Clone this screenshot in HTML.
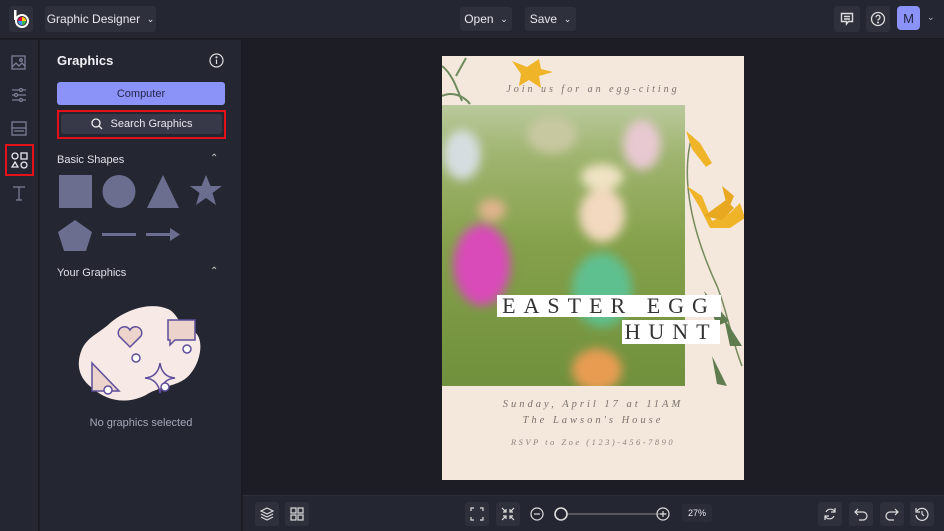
<!DOCTYPE html>
<html><head><meta charset="utf-8"><style>
*{box-sizing:border-box;margin:0;padding:0}
body{width:944px;height:531px;overflow:hidden;background:#1c1d25;font-family:"Liberation Sans",sans-serif;color:#e6e7ee;position:relative}
.abs{position:absolute}
.top{left:0;top:0;width:944px;height:39px;background:#242631;border-bottom:1px solid #1a1b22}
.btn{background:#2e303c;border-radius:3px;font-size:12px;color:#e8e8ef;display:flex;align-items:center;justify-content:center}
.rail{left:0;top:40px;width:39px;height:491px;background:#242631;border-right:1px solid #1a1b22}
.panel{left:40px;top:40px;width:202px;height:491px;background:#242631;border-right:1px solid #1a1b22}
.bottom{left:243px;top:495px;width:701px;height:36px;background:#242631;border-top:1px solid #2c2e3a}
.ib{background:#2e303c;border-radius:3px;width:24px;height:24px;display:flex;align-items:center;justify-content:center}
.shape{fill:#6b6e8e}
.serif{font-family:"Liberation Serif",serif}
</style></head><body>
<div class="abs top"></div>
<div class="abs btn" style="left:9px;top:6px;width:24px;height:26px;background:#2e303c">
<svg width="18" height="20" viewBox="0 0 18 20"><rect x="2" y="1" width="2.5" height="10" fill="#fff"/><circle cx="10" cy="12" r="6" fill="none" stroke="#fff" stroke-width="2"/><circle cx="10" cy="12" r="4" fill="#e04"/><path d="M10 8a4 4 0 0 1 4 4h-4z" fill="#fc0"/><path d="M10 12h4a4 4 0 0 1-4 4z" fill="#3b5"/><path d="M10 12v4a4 4 0 0 1-4-4z" fill="#39f"/></svg></div>
<div class="abs btn" style="left:45px;top:6px;width:111px;height:26px;font-size:12px">Graphic Designer&nbsp;&nbsp;<span style="font-size:9px">⌄</span></div>
<div class="abs btn" style="left:460px;top:7px;width:52px;height:24px">Open&nbsp;&nbsp;<span style="font-size:9px">⌄</span></div>
<div class="abs btn" style="left:525px;top:7px;width:51px;height:24px">Save&nbsp;&nbsp;<span style="font-size:9px">⌄</span></div>
<div class="abs btn" style="left:834px;top:6px;width:26px;height:26px"><svg width="14" height="14" viewBox="0 0 14 14" fill="none" stroke="#ddd" stroke-width="1.4"><path d="M1.5 1.5h11v8h-4l-2 2.5v-2.5h-5z"/><path d="M4 4.5h6M4 7h6"/></svg></div>
<div class="abs btn" style="left:866px;top:6px;width:24px;height:26px"><svg width="16" height="16" viewBox="0 0 16 16" fill="none" stroke="#ddd" stroke-width="1.3"><circle cx="8" cy="8" r="6.5"/><path d="M6 6.3a2 2 0 1 1 2.5 1.9c-.5.2-.5.6-.5 1.3"/><circle cx="8" cy="11.5" r=".4" fill="#ddd"/></svg></div>
<div class="abs btn" style="left:897px;top:6px;width:23px;height:24px;background:#8b93f8;color:#1e2040;font-size:13px;border-radius:4px">M</div>
<div class="abs" style="left:927px;top:12px;font-size:9px;color:#bbb">⌄</div>

<div class="abs rail"></div>
<svg class="abs" style="left:10px;top:54px" width="18" height="160" fill="none" stroke="#7c7f96" stroke-width="1.3">
<rect x="2" y="2" width="13" height="13"/><path d="M2 13l4-4 3 3 3-3 3 3"/><circle cx="11" cy="6" r="1.3"/>
<path d="M2 36h14M2 41h14M2 46h14"/><circle cx="11" cy="36" r="1.5" fill="#242631"/><circle cx="6" cy="41" r="1.5" fill="#242631"/><circle cx="11" cy="46" r="1.5" fill="#242631"/>
<rect x="2" y="68" width="14" height="13"/><path d="M2 74h14M4 77h10"/>
<path d="M3 133h12M9 133v13M6 146h6" />
</svg>
<div class="abs" style="left:5px;top:144px;width:29px;height:32px;border:2.5px solid #e4101a"></div>
<svg class="abs" style="left:11px;top:152px" width="18" height="17" fill="none" stroke="#e8e8f0" stroke-width="1.3"><circle cx="4" cy="4" r="3"/><rect x="10" y="1" width="6" height="6"/><path d="M4 10l3 5H1z"/><circle cx="13" cy="13" r="3"/></svg>

<div class="abs panel"></div>
<div class="abs" style="left:57px;top:53px;font-size:13px;font-weight:bold;color:#f0f0f5">Graphics</div>
<svg class="abs" style="left:209px;top:53px" width="15" height="15" fill="none" stroke="#ddd" stroke-width="1.2"><circle cx="7.5" cy="7.5" r="6.5"/><path d="M7.5 6.5v4.5"/><circle cx="7.5" cy="4.3" r=".5" fill="#ddd"/></svg>
<div class="abs btn" style="left:57px;top:82px;width:168px;height:23px;background:#8b93f8;color:#23264a;font-size:11px">Computer</div>
<div class="abs" style="left:57px;top:110px;width:169px;height:29px;border:2.5px solid #e4101a"></div>
<div class="abs btn" style="left:61px;top:114px;width:161px;height:20px;background:#373948;font-size:11px"><svg width="12" height="12" fill="none" stroke="#eee" stroke-width="1.3" style="margin-right:8px"><circle cx="5" cy="5" r="4"/><path d="M8 8l3 3"/></svg>Search Graphics</div>
<div class="abs" style="left:57px;top:154px;font-size:11px;color:#e0e0e8">Basic Shapes</div>
<div class="abs" style="left:210px;top:153px;font-size:10px;color:#ccc">⌃</div>
<svg class="abs" style="left:58px;top:174px" width="168" height="80">
<rect class="shape" x="1" y="1" width="33" height="33"/>
<circle class="shape" cx="61" cy="17.5" r="16.5"/>
<path class="shape" d="M105 1l16 33H89z"/>
<path class="shape" d="M148 1l4.5 11h11.5l-9.5 7 3.5 12-10-7-10 7 3.5-12-9.5-7h11.5z"/>
<path class="shape" d="M17 46l17 12-6 19H6L0 58z"/>
<rect class="shape" x="44" y="59" width="34" height="3"/>
<rect class="shape" x="88" y="59" width="26" height="3"/><path class="shape" d="M112 54l10 6.5-10 6.5z"/>
</svg>
<div class="abs" style="left:57px;top:267px;font-size:11px;color:#e0e0e8">Your Graphics</div>
<div class="abs" style="left:210px;top:266px;font-size:10px;color:#ccc">⌃</div>
<svg class="abs" style="left:78px;top:303px" width="124" height="100">
<path d="M30 22C45 8 70 -2 90 6c10 4 12 20 25 22 12 6 8 30-2 42-10 14-30 12-45 22-20 10-40 6-55-8C0 74-2 60 4 46 10 34 18 32 30 22z" fill="#f7e9e6"/>
<g fill="#ecd3cb" stroke="#5e4e9b" stroke-width="1.5">
<path d="M52 44l-11-11a6 6 0 0 1 11-6 6 6 0 0 1 11 6z"/>
<path d="M90 17h27v20H97l-5 5v-5h-2z"/>
<path d="M14 60l27 28H14z"/>
<path d="M82 60q2 14 15 15-13 1-15 15-2-14-15-15 13-1 15-15z" fill="none"/>
</g>
<g fill="#fff" stroke="#5e4e9b" stroke-width="1.5"><circle cx="58" cy="55" r="4"/><circle cx="109" cy="46" r="4"/><circle cx="30" cy="87" r="4"/><circle cx="87" cy="84" r="4"/></g>
</svg>
<div class="abs" style="left:40px;top:417px;width:202px;text-align:center;font-size:11px;color:#a6a8ba">No graphics selected</div>

<!-- card -->
<div class="abs" style="left:442px;top:56px;width:302px;height:424px;background:#f4e7dc;overflow:hidden">
<svg class="abs" style="left:0;top:0" width="302" height="424">
<path d="M0 10c10 8 14 20 20 35M0 40c10-5 22 0 28 8M14 20l10-18" stroke="#6d8a5d" stroke-width="2" fill="none"/>
<path d="M70 5l15 6 12-8 2 10 12 3-14 4 2 12-12-8-10 6 2-12z" fill="#f0b429"/>
<path d="M250 80c-10 35-5 85 25 150 10 25 15 55 25 80" stroke="#748a5c" stroke-width="1.5" fill="none"/>
<path d="M244 75l14 12 12 20-6 4-14-18z" fill="#f0b429"/>
<path d="M245 130l15 10 10 25 18-8 10-10 5 15-15 10-20 0-10-20z" fill="#f0b429"/>
<path d="M262 160l22-16 8 8-12 12zM280 130l12 10-6 14z" fill="#e8a820"/>
<path d="M262 235l25 30-12 5zM282 262l18 28-12 0zM270 300l15 30-10-2z" fill="#5e7c50"/>
</svg>
<div class="abs serif" style="left:0;top:28px;width:302px;text-align:center;font-style:italic;font-size:10px;letter-spacing:3px;color:#7a736e">Join us for an egg-citing</div>
<div class="abs" style="left:0;top:49px;width:243px;height:281px;overflow:hidden">
<div style="position:absolute;left:-10px;top:-10px;width:263px;height:301px;filter:blur(5px);background:
radial-gradient(ellipse 32px 38px at 170px 120px,#f2d9bf 70%,transparent 72%),
radial-gradient(ellipse 30px 18px at 170px 82px,#efe3c4 70%,transparent 72%),
radial-gradient(ellipse 42px 52px at 170px 195px,#5fc08f 70%,transparent 72%),
radial-gradient(ellipse 35px 30px at 165px 275px,#e89c52 70%,transparent 72%),
radial-gradient(ellipse 42px 60px at 50px 170px,#d84bb8 65%,transparent 70%),
radial-gradient(ellipse 22px 18px at 60px 115px,#e0b38d 60%,transparent 65%),
radial-gradient(ellipse 30px 40px at 30px 60px,#d6dde0 60%,transparent 65%),
radial-gradient(ellipse 30px 40px at 210px 50px,#e8c9d2 60%,transparent 65%),
radial-gradient(ellipse 40px 30px at 120px 40px,#c8c8a0 60%,transparent 65%),
linear-gradient(180deg,#bfcda6 0%,#9fb46f 20%,#84a04a 50%,#6f8f3c 100%)"></div></div>
<div class="abs serif" style="left:55px;top:239px;width:224px;height:22px;background:#fff;font-size:22px;letter-spacing:8px;line-height:22px;text-align:center;color:#333">EASTER EGG</div>
<div class="abs serif" style="left:180px;top:264px;width:98px;height:24px;background:#fff;font-size:22px;letter-spacing:8px;line-height:24px;text-align:center;color:#333">HUNT</div>
<div class="abs serif" style="left:0;top:343px;width:302px;text-align:center;font-style:italic;font-size:10.5px;letter-spacing:3px;color:#7a736e">Sunday, April 17 at 11AM</div>
<div class="abs serif" style="left:0;top:359px;width:302px;text-align:center;font-style:italic;font-size:10.5px;letter-spacing:3px;color:#7a736e">The Lawson's House</div>
<div class="abs serif" style="left:0;top:381px;width:302px;text-align:center;font-style:italic;font-size:8.5px;letter-spacing:2.5px;color:#8d8580">RSVP to Zoe (123)-456-7890</div>
</div>

<div class="abs bottom"></div>
<div class="abs ib" style="left:255px;top:502px"><svg width="14" height="14" fill="none" stroke="#ddd" stroke-width="1.2"><path d="M7 1l6 3-6 3-6-3z"/><path d="M1 7l6 3 6-3M1 10l6 3 6-3"/></svg></div>
<div class="abs ib" style="left:285px;top:502px"><svg width="14" height="14" fill="none" stroke="#ddd" stroke-width="1.2"><rect x="1" y="1" width="5" height="5"/><rect x="8" y="1" width="5" height="5"/><rect x="1" y="8" width="5" height="5"/><rect x="8" y="8" width="5" height="5"/></svg></div>
<div class="abs ib" style="left:465px;top:502px"><svg width="14" height="14" fill="none" stroke="#ddd" stroke-width="1.2"><path d="M1 4V1h3M10 1h3v3M13 10v3h-3M4 13H1v-3"/></svg></div>
<div class="abs ib" style="left:496px;top:502px"><svg width="14" height="14" fill="none" stroke="#ddd" stroke-width="1.2"><path d="M1 1l4 4M5 2v3H2M13 1l-4 4M9 2v3h3M1 13l4-4M2 9h3v3M13 13l-4-4M12 9H9v3"/></svg></div>
<svg class="abs" style="left:529px;top:506px" width="145" height="16" fill="none" stroke="#ddd" stroke-width="1.2"><circle cx="8" cy="8" r="6"/><path d="M5 8h6"/><path d="M38 8h100" stroke="#777"/><circle cx="32" cy="8" r="6" fill="#242631" stroke-width="1.6"/><circle cx="134" cy="8" r="6"/><path d="M131 8h6M134 5v6"/></svg>
<div class="abs btn" style="left:682px;top:504px;width:30px;height:18px;background:#2a2c38;font-size:9px">27%</div>
<div class="abs ib" style="left:818px;top:502px"><svg width="14" height="14" fill="none" stroke="#ddd" stroke-width="1.2"><path d="M3 5a5 5 0 0 1 9 0M11 9a5 5 0 0 1-9 0M12 1v4H8M2 13V9h4"/></svg></div>
<div class="abs ib" style="left:849px;top:502px"><svg width="14" height="14" fill="none" stroke="#ddd" stroke-width="1.2"><path d="M4 2L1 5l3 3M1 5h8a4 4 0 0 1 0 8H5"/></svg></div>
<div class="abs ib" style="left:880px;top:502px"><svg width="14" height="14" fill="none" stroke="#ddd" stroke-width="1.2"><path d="M10 2l3 3-3 3M13 5H5a4 4 0 0 0 0 8h4"/></svg></div>
<div class="abs ib" style="left:910px;top:502px"><svg width="14" height="14" fill="none" stroke="#ddd" stroke-width="1.2"><path d="M2 4a6 6 0 1 1-1 4"/><path d="M1 1v4h4M7 4v3l2 2"/></svg></div>
</body></html>
